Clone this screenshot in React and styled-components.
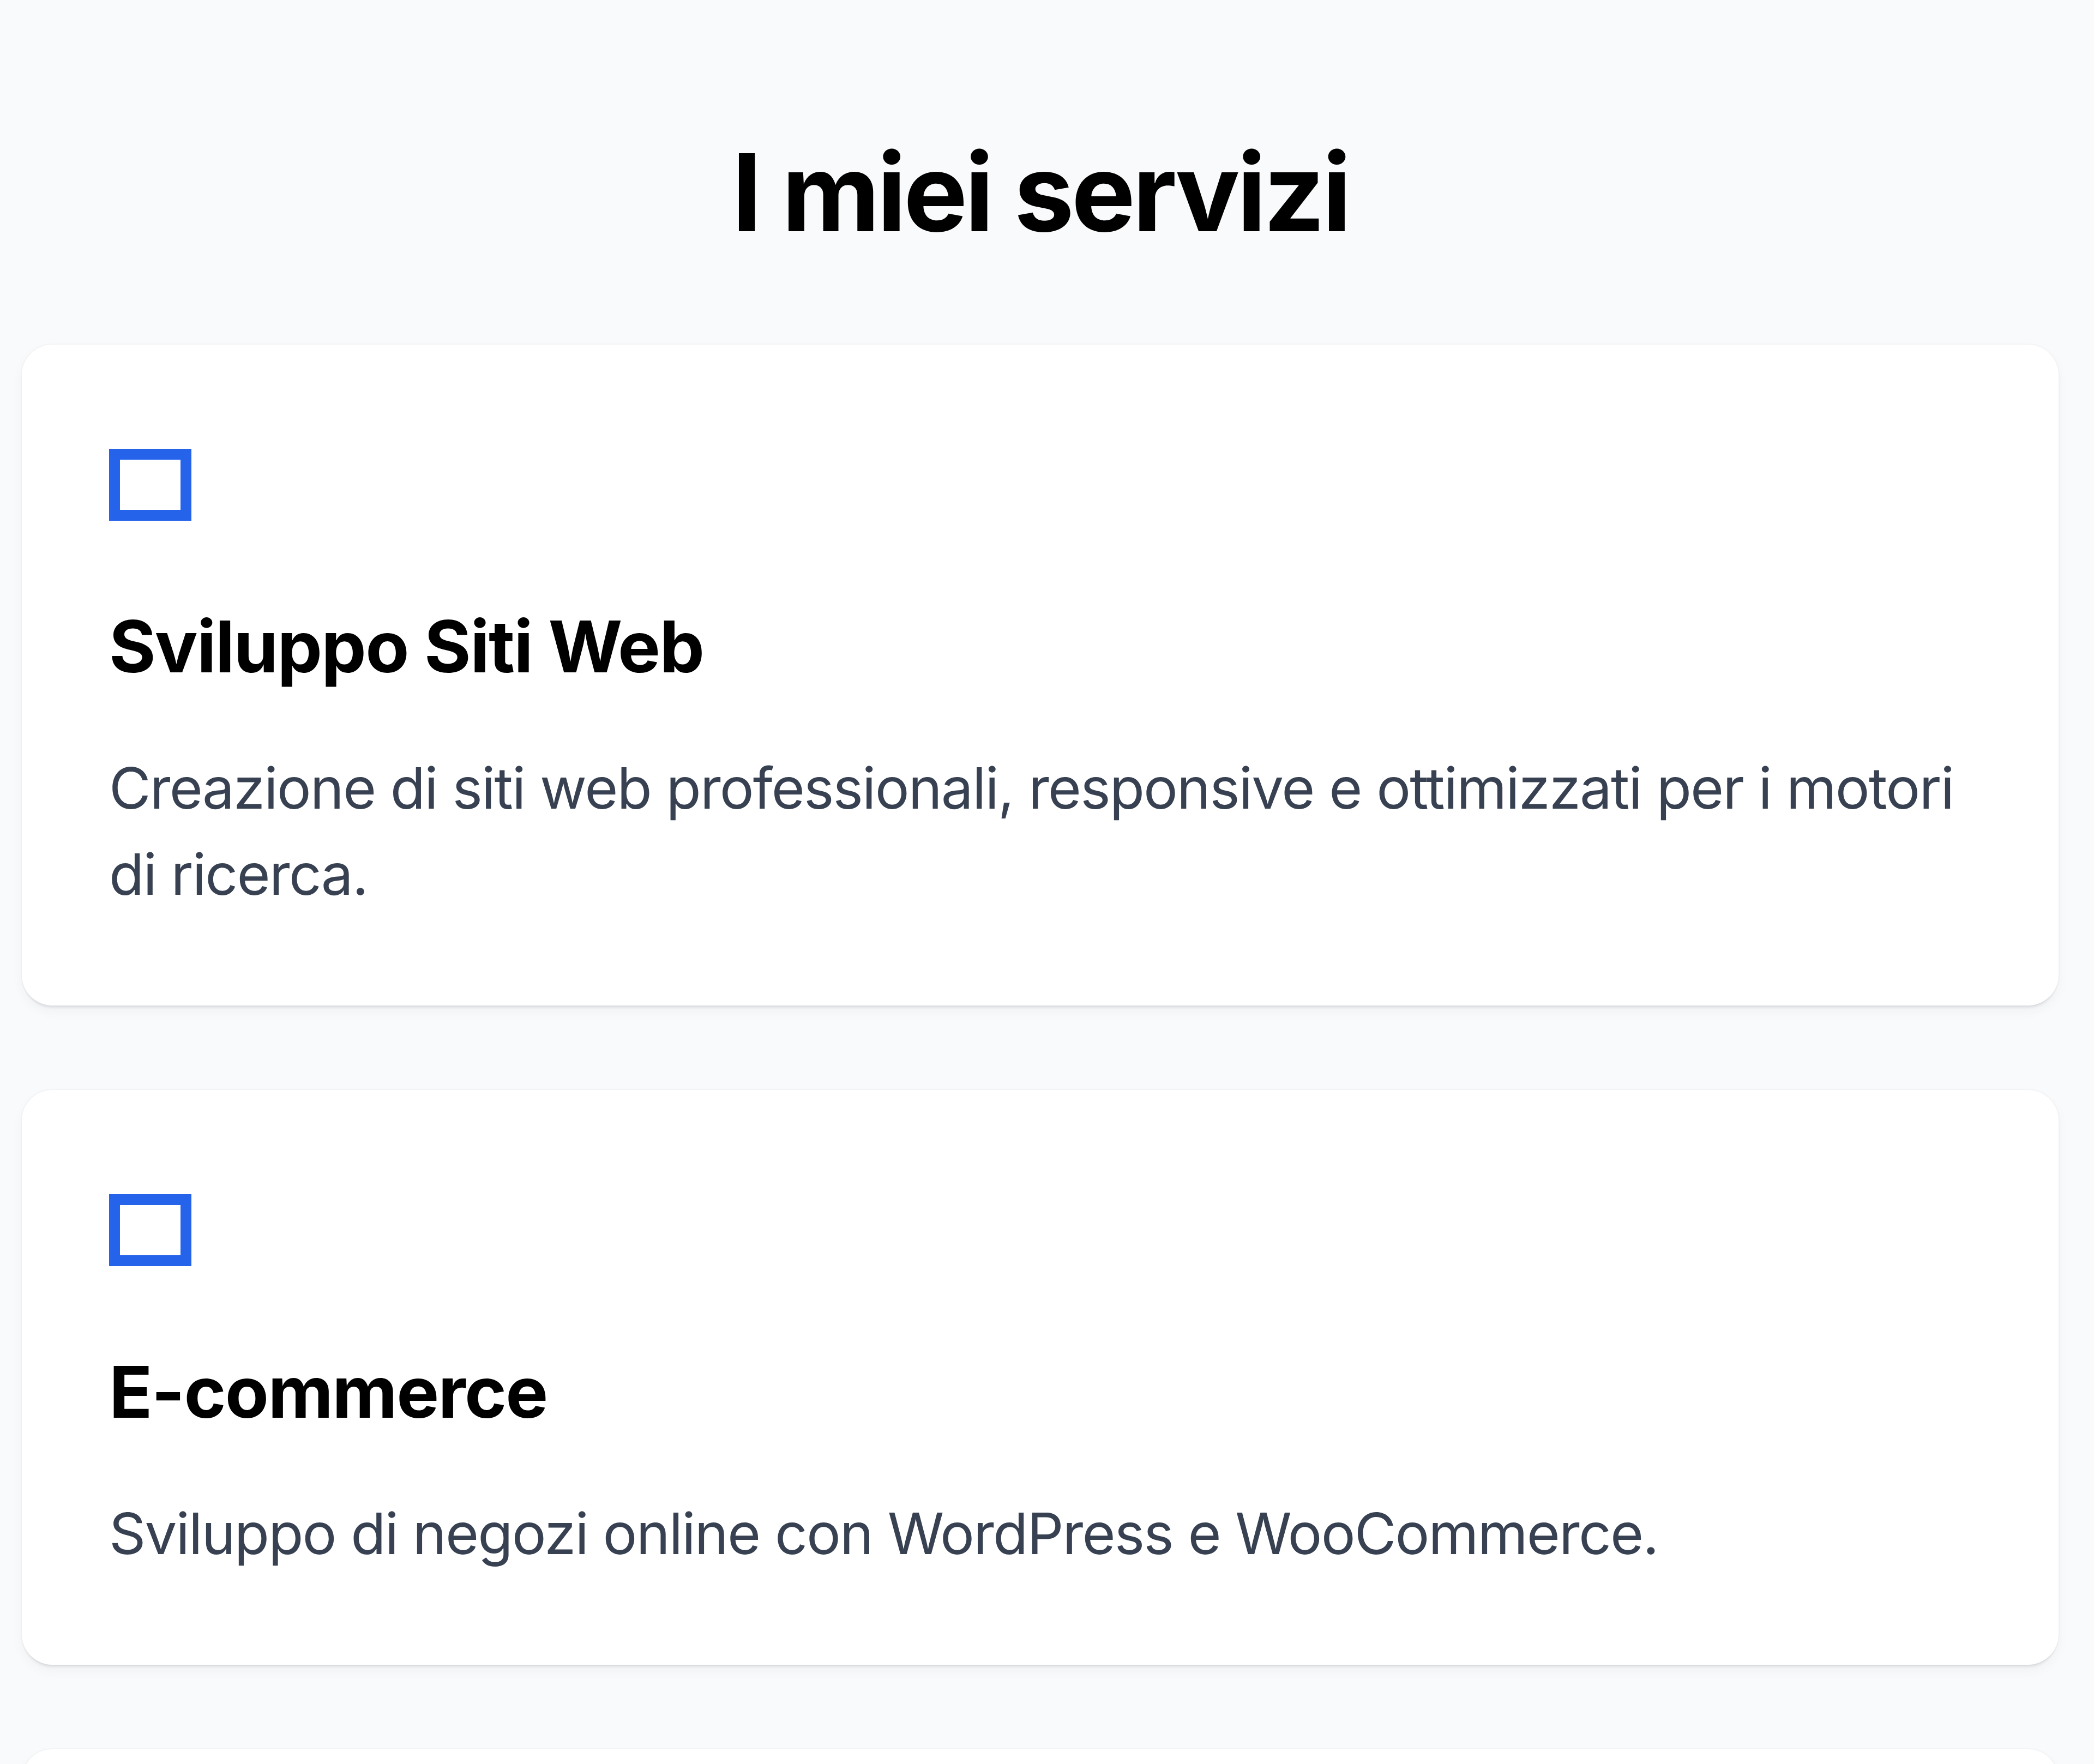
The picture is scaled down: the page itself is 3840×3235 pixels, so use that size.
import React from 'react'
import styled, { createGlobalStyle } from 'styled-components'

const ink = '#000'
const body = '#374151'
const accent = '#2563eb'
const paper = '#f9fafb'

const GlobalStyle = createGlobalStyle`
  html, body {
    margin: 0;
    padding: 0;
    background: ${paper};
  }
  body {
    font-family: 'Inter', 'Noto Sans', sans-serif;
    -webkit-font-smoothing: antialiased;
  }
`

const Page = styled.main`
  min-height: 3235px;
  padding: 235px 65px 0 40px;
  box-sizing: border-box;
  background: ${paper};
`

const Title = styled.h2`
  margin: 0 0 161px;
  font-size: 197px;
  line-height: 236px;
  font-weight: 700;
  letter-spacing: -5px;
  color: ${ink};
  text-align: center;
`

const CardList = styled.div`
  display: flex;
  flex-direction: column;
  gap: 155px;
`

const Card = styled.article`
  background: #fff;
  border-radius: 56px;
  padding: 160px 160px 162px;
  box-shadow:
    0 0 0 2px rgba(15, 23, 42, 0.025),
    0 7px 4px -3px rgba(15, 23, 42, 0.08),
    0 10px 22px rgba(15, 23, 42, 0.04);
`

const IconWrap = styled.div`
  padding-top: 31px;
  margin-bottom: 139px;
  line-height: 0;
`

const CardTitle = styled.h3`
  margin: 0 0 88px;
  font-size: 131px;
  line-height: 184px;
  font-weight: 700;
  letter-spacing: -1.7px;
  color: ${ink};
`

const CardText = styled.p`
  margin: 0;
  font-size: 105px;
  line-height: 158px;
  font-weight: 400;
  letter-spacing: -1.9px;
  color: ${body};
`

// outlined square used as the service glyph
const ServiceIcon = () => (
  <svg width="151" height="132" viewBox="0 0 151 132" fill="none">
    <rect x="10" y="10" width="131" height="112" stroke={accent} strokeWidth="20" />
  </svg>
)

const services = [
  {
    title: 'Sviluppo Siti Web',
    text: 'Creazione di siti web professionali, responsive e ottimizzati per i motori di ricerca.'
  },
  {
    title: 'E-commerce',
    text: 'Sviluppo di negozi online con WordPress e WooCommerce.'
  },
  {
    title: 'Ottimizzazione SEO',
    text: 'Analisi e miglioramento della visibilità sui motori di ricerca.'
  }
]

export default function App () {
  return (
    <Page>
      <GlobalStyle />
      <Title>I miei servizi</Title>
      <CardList>
        {services.map(s => (
          <Card key={s.title}>
            <IconWrap>
              <ServiceIcon />
            </IconWrap>
            <CardTitle>{s.title}</CardTitle>
            <CardText>{s.text}</CardText>
          </Card>
        ))}
      </CardList>
    </Page>
  )
}
